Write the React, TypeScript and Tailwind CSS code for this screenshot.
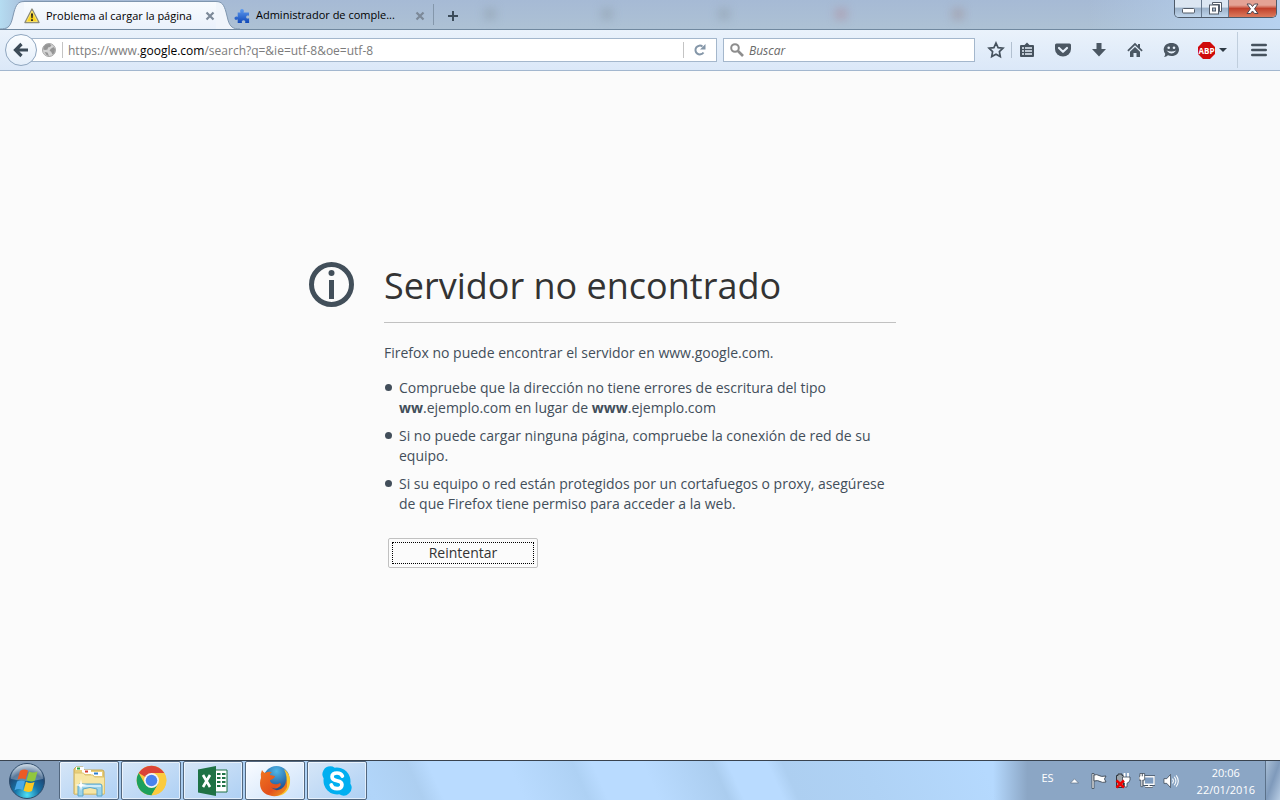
import type { ReactNode } from "react"

const uiFont = "font-['Open_Sans','Noto_Sans',sans-serif]"

const tips: ReactNode[] = [
	<>
		Compruebe que la dirección no tiene errores de escritura del tipo{" "}
		<strong>ww</strong>.ejemplo.com en lugar de <strong>www</strong>
		.ejemplo.com
	</>,
	"Si no puede cargar ninguna página, compruebe la conexión de red de su equipo.",
	"Si su equipo o red están protegidos por un cortafuegos o proxy, asegúrese de que Firefox tiene permiso para acceder a la web.",
]

function WarningIcon() {
	return (
		<svg width="16" height="16" viewBox="0 0 16 16" aria-hidden="true">
			<path d="M8 1 15 14.5H1Z" fill="#f6c913" stroke="#8b8b7a" strokeWidth="1.4" strokeLinejoin="round" />
			<path d="M8 3 13.4 13.6H2.6Z" fill="#fbd51f" stroke="#fff3a8" strokeWidth=".6" />
			<path d="M7 5.5h2l-.4 4.8H7.4ZM7.1 11.2h1.8v1.7H7.1Z" fill="#222" />
		</svg>
	)
}

function PuzzleIcon() {
	return (
		<svg width="16" height="16" viewBox="0 0 16 16" aria-hidden="true">
			<defs>
				<linearGradient id="puzzle" x1="0" y1="0" x2="0" y2="1">
					<stop offset="0" stopColor="#5f9bf0" />
					<stop offset="1" stopColor="#1048b8" />
				</linearGradient>
			</defs>
			<path
				d="M6.5 4.500C5.500 2.600 6.500 1 8 1s2.500 1.600 1.500 3.500H15v3.300c-1.700-.8-2.800-.1-2.800 1.200s1.200 2.100 2.900 1.200V15h-4c.7-1.800-.2-2.700-1.500-2.700S7.300 13.200 8 15H3.700v-3.700C2 12.400.5 11.500.5 10.200S2 8 3.700 8.900V4.500Z"
				fill="url(#puzzle)"
			/>
		</svg>
	)
}

function CloseIcon() {
	return (
		<svg width="10" height="10" viewBox="0 0 10 10" aria-hidden="true">
			<path d="m1.500 1.500 7 7m0-7-7 7" stroke="#7c8998" strokeWidth="2.200" />
		</svg>
	)
}

function TabStrip() {
	return (
		<div className="relative flex h-[30px] shrink-0 items-stretch overflow-hidden border-b border-[#70889f] bg-linear-to-b from-[#a6bad5] to-[#adc1d4]">
			<div className="absolute inset-y-0 right-0 w-48 bg-linear-to-r from-transparent to-[#b7d2f0]" />
			<div className="absolute top-0 left-0 h-full w-6 bg-linear-to-r from-[#b5dcf1] to-[#a9c0dc]" />
			<div className="absolute inset-x-0 top-2 ml-[484px] flex w-[480px] justify-between blur-xs">
				<span className="h-3 w-3 bg-[#8f9fae]/50" />
				<span className="h-3 w-3 bg-[#8f9fae]/50" />
				<span className="h-3 w-3 bg-[#8f9fae]/50" />
				<span className="h-3 w-3 bg-[#b08f9f]/50" />
				<span className="h-3 w-3 bg-[#a0939b]/50" />
			</div>

			<div role="tablist" className="relative flex">
				<div role="tab" aria-selected="true" className="flex pt-px">
					<svg width="24" height="28" viewBox="0 0 24 28" className="-mb-px h-7" aria-hidden="true">
						<path d="M0 29c7 0 10-2 12-10l2-8C16 4 18 .5 24 .5V29Z" fill="#f0f5fb" />
						<path d="M0 28c7 0 10-2 12-9l2-8C16 4 18 .5 24 .5" fill="none" stroke="#7f96af" />
					</svg>
					<div className="-mb-px flex w-[192px] items-center border-t border-[#7f96af] bg-linear-to-b from-[#f8fbfe] to-[#eaf1fb] text-black">
						<WarningIcon />
						<span className="ml-1.5 w-[159px] whitespace-nowrap text-[11px]">Problema al cargar la página</span>
						<button type="button" aria-label="Cerrar pestaña">
							<CloseIcon />
						</button>
					</div>
					<svg width="24" height="28" viewBox="0 0 24 28" className="-mb-px h-7" aria-hidden="true">
						<path d="M0 .5c6 0 8 3.500 10 10.500l2 8c2 7 5 9 12 9v1H0Z" fill="#f0f5fb" />
						<path d="M0 .5c6 0 8 3.500 10 10.500l2 8c2 7 5 9 12 9" fill="none" stroke="#7f96af" />
					</svg>
				</div>
				<div role="tab" aria-selected="false" className="-ml-1.5 flex items-center pt-0.5 text-black">
					<PuzzleIcon />
					<span className="ml-1.5 w-[159px] whitespace-nowrap text-[11px]">Administrador de comple...</span>
					<button type="button" aria-label="Cerrar pestaña">
						<CloseIcon />
					</button>
				</div>
			</div>
			<div className="relative my-1 ml-2 w-px bg-[#8497ab]" />
			<button type="button" aria-label="Nueva pestaña" className="relative ml-3 pt-0.5">
				<svg width="13" height="12" viewBox="0 0 13 12" aria-hidden="true">
					<path d="M7 1v10M2 6h10" stroke="#3c4c5a" strokeWidth="2" />
				</svg>
			</button>

			<div className="relative mr-[3px] ml-auto flex h-[18px] overflow-hidden rounded-b-[5px] border border-t-0 border-[#4d5a69]">
				<button type="button" aria-label="Minimizar" className="flex w-[27px] items-center justify-center border-r border-[#65778c] bg-linear-to-b from-[#dbe6f2] from-40% via-[#9db3cb] via-50% to-[#c0d6ec]">
					<svg width="13" height="6" viewBox="0 0 13 6" className="mt-1" aria-hidden="true">
						<rect x=".5" y=".5" width="12" height="4.500" rx="1" fill="#fff" stroke="#525c69" />
					</svg>
				</button>
				<button type="button" aria-label="Restaurar" className="flex w-[27px] items-center justify-center border-r border-[#65778c] bg-linear-to-b from-[#dbe6f2] from-40% via-[#9db3cb] via-50% to-[#c0d6ec]">
					<svg width="13" height="13" viewBox="0 0 13 13" aria-hidden="true">
						<path d="M3.500.5h9v9h-2v-7h-7Z" fill="#fff" stroke="#525c69" />
						<rect x=".5" y="3" width="9" height="9" fill="#fff" stroke="#525c69" />
						<rect x="3.500" y="6" width="3" height="3" fill="#a9bccf" stroke="#525c69" />
					</svg>
				</button>
				<button type="button" aria-label="Cerrar" className="flex w-[47px] items-center justify-center bg-linear-to-b from-[#e4a294] from-30% via-[#c0402b] via-50% to-[#dc7a5c]">
					<svg width="13" height="12" viewBox="0 0 13 12" aria-hidden="true">
						<path d="M1 1h3.500l2 2.500L8.500 1H12L8.500 5.800l3.500 4.700H8.500L6.500 8l-2 2.500H1l3.500-4.700Z" fill="#fff" stroke="#4f4852" />
					</svg>
				</button>
			</div>
		</div>
	)
}

function AddressBar() {
	return (
		<div className="flex min-w-0 flex-1 items-center">
			<button
				type="button"
				aria-label="Atrás"
				className="relative z-10 ml-[5px] flex h-8 w-8 shrink-0 items-center justify-center rounded-full border border-[#8fa6bf] bg-linear-to-b from-[#fbfdff] to-[#e4eefa]"
			>
				<svg width="16" height="16" viewBox="0 0 16 16" aria-hidden="true">
					<path d="M8.500 2 2.500 8l6 6M3 8h12" fill="none" stroke="#3c4b58" strokeWidth="3.200" />
				</svg>
			</button>
			<div className="-ml-2 flex h-6 min-w-0 flex-1 items-center border border-[#a4b7cc] bg-white pl-3">
				<svg width="14" height="14" viewBox="0 0 14 14" className="shrink-0" aria-hidden="true">
					<circle cx="7" cy="7" r="6.500" fill="#d4d4d4" stroke="#a6a6a6" />
					<path d="M1.500 4 4 1.200 8 1l1.500 1.500L8 4 6 4.500 5.500 6.500 3 7 1.300 6.500ZM8.500 6l3-2 1.500 2-.5 4-2 1.500-1.500-3-1.500-.5ZM2.500 9l3 .5L7 13 4.500 12Z" fill="#959595" />
				</svg>
				<div className="mr-[5px] ml-1.5 h-4 w-px shrink-0 bg-[#c4c4c4]" />
				<div className="relative h-full min-w-0 flex-1">
					<input
						aria-label="Dirección"
						defaultValue="https://www.google.com/search?q=&ie=utf-8&oe=utf-8"
						className="absolute inset-0 h-full w-full bg-transparent text-xs text-transparent caret-black outline-none"
					/>
					<div aria-hidden="true" className="pointer-events-none flex h-full items-center pt-0.5 text-xs whitespace-nowrap text-[#7c7c7c]">
						https://www.<span className="text-black">google.com</span>/search?q=&amp;ie=utf-8&amp;oe=utf-8
					</div>
				</div>
				<div className="h-4 w-px shrink-0 bg-[#c4c4c4]" />
				<button type="button" aria-label="Recargar" className="flex w-8 shrink-0 items-center justify-center">
					<svg width="12" height="12" viewBox="0 0 12 12" aria-hidden="true">
						<path d="M9.500 8.500A4.400 4.400 0 1 1 8.500 2.500" fill="none" stroke="#8496a8" strokeWidth="2" />
						<path d="M11.500 0v5.500H6Z" fill="#8496a8" />
					</svg>
				</button>
			</div>
		</div>
	)
}

function ToolbarButton({ label, children }: { label: string; children: ReactNode }) {
	return (
		<button type="button" aria-label={label} className="flex h-8 w-9 shrink-0 items-center justify-center">
			<svg width="18" height="18" viewBox="0 0 18 18" aria-hidden="true">
				{children}
			</svg>
		</button>
	)
}

function Toolbar() {
	return (
		<div className="flex h-[41px] shrink-0 items-center border-b border-[#a3b7cf] bg-linear-to-b from-[#eaf2fb] to-[#dbe8f8]">
			<AddressBar />
			<label className="ml-1.5 flex h-6 w-[252px] shrink-0 items-center border border-[#a4b7cc] bg-white pl-1.5">
				<svg width="14" height="14" viewBox="0 0 14 14" className="shrink-0" aria-hidden="true">
					<circle cx="5" cy="5" r="3.800" fill="none" stroke="#8d8d8d" strokeWidth="2" />
					<path d="m8 8 5 5" stroke="#8d8d8d" strokeWidth="2.600" />
				</svg>
				<input
					aria-label="Buscar"
					placeholder="Buscar"
					className="ml-[5px] w-full min-w-0 bg-transparent pt-0.5 text-xs italic outline-none placeholder:text-[#6a6a6a]"
				/>
			</label>

			<button type="button" aria-label="Añadir a marcadores" className="ml-3 flex h-8 w-[18px] shrink-0 items-center justify-center">
				<svg width="18" height="18" viewBox="0 0 18 18" aria-hidden="true">
					<path d="m9 2 2.100 4.600 4.900.6-3.600 3.400.9 5L9 13.200l-4.300 2.400.9-5L2 7.200l4.900-.6Z" fill="none" stroke="#46525e" strokeWidth="1.700" />
				</svg>
			</button>
			<div className="ml-1.5 h-4 w-px shrink-0 bg-[#b2c0d0]" />
			<div className="-ml-[3px] flex items-center">
				<ToolbarButton label="Marcadores">
					<path d="M3 4h3.500L9 1.500 11.500 4H15q1 0 1 1v10q0 1-1 1H3q-1 0-1-1V5q0-1 1-1Z" fill="#46525e" />
					<path d="M4 7h2M7 7h7M4 10h2M7 10h7M4 13h2M7 13h7" stroke="#e6effa" strokeWidth="1.600" />
				</ToolbarButton>
				<ToolbarButton label="Pocket">
					<path d="M2.500 2.500h13q1.500 0 1.500 1.500v4a8 7.500 0 0 1-16 0V4q0-1.500 1.500-1.500Z" fill="#4b5763" />
					<path d="m5 7 4 3.800L13 7" fill="none" stroke="#e6effa" strokeWidth="2.200" strokeLinecap="round" strokeLinejoin="round" />
				</ToolbarButton>
				<ToolbarButton label="Descargas">
					<path d="M6.500 2h5v6H16l-7 7.500L2 8h4.500Z" fill="#4b5763" />
				</ToolbarButton>
				<ToolbarButton label="Inicio">
					<path d="M9 1.800 1.300 9.300l1.200 1.200L9 4.300l6.500 6.200 1.200-1.200L14 6.700V3h-2v1.800Z" fill="#4b5763" />
					<path d="M9 5.900 4 10.700V16h3.500v-4h3v4H14v-5.300Z" fill="#4b5763" />
				</ToolbarButton>
				<ToolbarButton label="Chat">
					<path d="M9.500 2C14 2 17 4.700 17 8.500S14 15 9.500 15q-2 0-3.500-.7Q4.500 16 2 16q1.300-1.500 1.200-3.300Q1.700 11 1.700 8.500C1.700 4.700 5 2 9.500 2Z" fill="#4b5763" />
					<circle cx="6.700" cy="6.700" r="1.300" fill="#e6effa" />
					<circle cx="12" cy="6.700" r="1.300" fill="#e6effa" />
					<path d="M4.500 9.500Q9.500 15.500 14.300 9.500 9.500 11.500 4.500 9.500Z" fill="#e6effa" />
				</ToolbarButton>
			</div>
			<button type="button" aria-label="Adblock Plus" className="ml-[9px] flex h-8 w-[28px] shrink-0 items-center gap-1">
				<svg width="17" height="17" viewBox="0 0 17 17" className="shrink-0" aria-hidden="true">
					<path d="M5 0h7l5 5v7l-5 5H5l-5-5V5Z" fill="#cf0a0a" />
					<text x="8.500" y="11.500" textAnchor="middle" fontSize="8" fontWeight="700" fill="#fff" fontFamily="Open Sans, sans-serif">
						ABP
					</text>
				</svg>
				<svg width="8" height="4" viewBox="0 0 8 4" className="shrink-0" aria-hidden="true">
					<path d="M0 0h8L4 4Z" fill="#2f3b46" />
				</svg>
			</button>
			<div className="ml-[11px] h-9 w-px shrink-0 bg-[#c0cedd]" />
			<button type="button" aria-label="Abrir menú" className="flex h-8 w-[42px] shrink-0 items-center justify-center">
				<svg width="16" height="14" viewBox="0 0 16 14" aria-hidden="true">
					<path d="M1.300 2h13.400M1.300 7h13.400M1.300 12h13.400" stroke="#46525e" strokeWidth="2.600" strokeLinecap="round" />
				</svg>
			</button>
		</div>
	)
}

function ErrorPage() {
	return (
		<main className="flex flex-1 items-center justify-center bg-[#fbfbfb] pb-0.5 text-[#424e5a]">
			<div className="flex w-full max-w-[662px] items-start pr-[75px]">
				<svg width="45" height="45" viewBox="0 0 45 45" className="mr-[30px] shrink-0" aria-hidden="true">
					<circle cx="22.500" cy="22.500" r="20" fill="none" stroke="#424f5a" strokeWidth="5" />
					<circle cx="22.500" cy="11" r="3" fill="#424f5a" />
					<path d="M20 18h5v19h-5Z" fill="#424f5a" />
				</svg>
				<div className="min-w-0 flex-1 text-sm leading-5">
					<h1 className="border-b border-[#c1c1c1] pb-3 text-[36px] leading-12 text-[#333]">
						Servidor no encontrado
					</h1>
					<p className="mt-5">Firefox no puede encontrar el servidor en www.google.com.</p>
					<ul className="mt-[15px] space-y-2">
						{tips.map((tip, i) => (
							<li key={i} className="flex">
								<span className="mt-1.5 mr-[7px] ml-px size-[7px] shrink-0 rounded-full bg-[#424e5a]" />
								<span>{tip}</span>
							</li>
						))}
					</ul>
					<button type="button" className="mt-6 ml-1 h-[30px] w-[150px] rounded-xs border border-[#c1c1c1] bg-[#fbfbfb] p-[3px] text-[#333]">
						<span className="flex h-full items-center justify-center border border-dotted border-black">Reintentar</span>
					</button>
				</div>
			</div>
		</main>
	)
}

function StartOrb() {
	return (
		<svg width="38" height="38" viewBox="0 0 38 38" aria-hidden="true">
			<defs>
				<radialGradient id="orb" cx=".5" cy=".9" r=".85">
					<stop offset="0" stopColor="#4fe0f5" />
					<stop offset=".4" stopColor="#1675a9" />
					<stop offset=".75" stopColor="#1f4876" />
					<stop offset="1" stopColor="#a9bfd3" />
				</radialGradient>
			</defs>
			<circle cx="19" cy="19" r="17.500" fill="url(#orb)" stroke="#2f4c6b" />
			<path d="M3 17a16 15 0 0 1 32 0q-16 4-32 0Z" fill="#fff" opacity=".28" />
			<path d="M12 9q4-2.500 8-.5l-2.500 9q-3.500-2-8 .3Z" fill="#ec5a24" />
			<path d="M21 9.500q4 2 8.500 0l-2.500 9q-4 2-8.400-.2Z" fill="#91c73e" />
			<path d="M9 19.500q4-2 8-.3l-2.500 8.800q-3.600-2-8 .3Z" fill="#4aa8e8" />
			<path d="M18 19.800q4 2.200 8.500.3L24 29q-4 2-8.400-.2Z" fill="#fbc822" />
		</svg>
	)
}

function ExplorerIcon() {
	return (
		<svg width="34" height="32" viewBox="0 0 34 32" aria-hidden="true">
			<path d="M2 29V4l2-2h7l1 3h18q2 0 2 2v22Z" fill="#e9cf7b" stroke="#c6a652" />
			<path d="M4 2h8v3H4Z" fill="#fff" />
			<path d="M5 2.500h3v2H5Z" fill="#28a43a" />
			<path d="M10 5h9v4h-9Z" fill="#fff" />
			<path d="M13 5.500h3v2h-3Z" fill="#d63e2e" />
			<path d="M19 7h11v4H19Z" fill="#fff" />
			<path d="M22 7.500h4v2h-4Z" fill="#2b7fd0" />
			<path d="M2.500 8h9l1.500 2h8l1.500 2h10v17h-30Z" fill="#f7e6a5" stroke="#dcc273" />
			<path d="M6 31V21q0-2 2-2h20q2 0 2 2v10h-5v-7q-7-3-14 0v7Z" fill="#9bd3ea" stroke="#5aa6cb" />
			<path d="M7 21h22" stroke="#e2f5fc" strokeWidth="1.500" />
			<path d="m9 14 1 5 5 1-5 1-1 5-1-5-5-1 5-1Z" fill="#fff" />
		</svg>
	)
}

function ChromeIcon() {
	return (
		<svg width="31" height="31" viewBox="0 0 48 48" aria-hidden="true">
			<circle cx="24" cy="24" r="23" fill="#fbcb3f" />
			<path d="M24 24 4.100 12.500A23 23 0 0 1 43.900 12.500H24Z" fill="#db4437" />
			<path d="M4.100 12.500A23 23 0 0 0 24 47l10-17.300-10 4.300-10-4.300Z" fill="#1da05c" />
			<path d="M24 47a23 23 0 0 0 19.900-34.500H24L34 30Z" fill="#fbcb3f" />
			<circle cx="24" cy="24" r="11.500" fill="#f4f4f4" />
			<circle cx="24" cy="24" r="9" fill="#4a83ee" />
		</svg>
	)
}

function ExcelIcon() {
	return (
		<svg width="32" height="32" viewBox="0 0 32 32" aria-hidden="true">
			<path d="M17 5h13v22H17Z" fill="#fff" stroke="#1f7245" />
			<path d="M20 9h3.500M25 9h3.500M20 13h3.500M25 13h3.500M20 17h3.500M25 17h3.500M20 21h3.500M25 21h3.500" stroke="#1f7245" strokeWidth="2" />
			<path d="M1 4.500 19 1v30L1 27.500Z" fill="#1f7245" />
			<path d="m6 10 7 12m0-12L6 22" stroke="#fff" strokeWidth="2.600" />
		</svg>
	)
}

function FirefoxIcon() {
	return (
		<svg width="32" height="32" viewBox="0 0 32 32" aria-hidden="true">
			<defs>
				<linearGradient id="fox" x1="0" y1="0" x2="1" y2="1">
					<stop offset="0" stopColor="#f0761f" />
					<stop offset=".6" stopColor="#e2501c" />
					<stop offset="1" stopColor="#f3a21f" />
				</linearGradient>
				<radialGradient id="globe" cx=".5" cy=".2" r=".8">
					<stop offset="0" stopColor="#4fb7e8" />
					<stop offset="1" stopColor="#153f86" />
				</radialGradient>
			</defs>
			<circle cx="17.500" cy="14" r="13" fill="url(#globe)" />
			<path d="M25 4q7 5 6 14-2 13-15 13 9-3 11-11 2-8-2-16Z" fill="#fbc52c" />
			<path
				d="M3 5q1 2 3 3 3-2 7-1-2 1-2 3l5 1q-1 3-5 4 0 3 4 4 3 1 6-1 2 2-1 4-4 3-8 0 4 5 10 2 5-3 5-9 3 7-2 12-5 5-12 4Q1 29 1 18q0-3 1-5-1-4 1-8Z"
				fill="url(#fox)"
			/>
		</svg>
	)
}

function SkypeIcon() {
	return (
		<svg width="32" height="32" viewBox="0 0 24 24" aria-hidden="true">
			<path d="M7 1a6 6 0 0 1 3.300 1A10.300 10.300 0 0 1 22 13.800 6 6 0 0 1 13.700 22 10.300 10.300 0 0 1 2 10.200 6 6 0 0 1 7 1Z" fill="#00aff0" />
			<path
				d="M16 8.300Q15 6 12 6 8.300 6 8.300 8.800q0 2.300 3.700 3 3.700.7 3.700 3 0 2.900-3.700 2.900-3.500 0-4.300-2.700"
				fill="none"
				stroke="#fff"
				strokeWidth="2.800"
				strokeLinecap="round"
			/>
		</svg>
	)
}

const apps = [
	{ name: "Explorador de Windows", icon: <ExplorerIcon /> },
	{ name: "Google Chrome", icon: <ChromeIcon /> },
	{ name: "Excel", icon: <ExcelIcon /> },
	{ name: "Firefox", icon: <FirefoxIcon />, active: true },
	{ name: "Skype", icon: <SkypeIcon /> },
]

function SystemTray() {
	return (
		<div className="ml-auto flex items-center bg-linear-to-r from-transparent to-[#8ba6c5] to-12% pl-12 text-white">
			<span className="mr-4 mb-1 text-[11px]">ES</span>
			<button type="button" aria-label="Mostrar iconos ocultos" className="mr-3">
				<svg width="9" height="6" viewBox="0 0 9 6" aria-hidden="true">
					<path d="M.5 5 4.500.8l4 4.200Z" fill="#fff" stroke="#5f7084" strokeWidth=".7" />
				</svg>
			</button>
			<div className="mr-[18px] flex items-center gap-2">
				<svg width="16" height="16" viewBox="0 0 16 16" aria-hidden="true">
					<path d="M1 .5h2v15H1Z" fill="#fff" stroke="#3b4653" strokeWidth=".8" />
					<path d="M3 2q3-1 5 .5t7 .5l-1.500 3L15 9q-4 1-6-.5T3 8Z" fill="#fff" stroke="#3b4653" strokeWidth=".9" />
				</svg>
				<svg width="16" height="16" viewBox="0 0 16 16" aria-hidden="true">
					<path d="M1.500 2.500h1.500v-1.500h4v1.500h1.500v12h-7Z" fill="#9aa3ab" stroke="#2f363e" />
					<path d="M9.500 0v4M13 0v4" stroke="#fff" strokeWidth="1.800" />
					<path d="M7.500 4h7.500v3q-1 3-3 3.200V14H9.500v-4Q7.500 9.500 7.500 7Z" fill="#fff" stroke="#3b4653" strokeWidth=".8" />
					<path d="m1.500 7.500 7.500 7m0-7-7.500 7" stroke="#f00000" strokeWidth="2.400" />
				</svg>
				<svg width="16" height="16" viewBox="0 0 17 16" aria-hidden="true">
					<rect x="5.500" y="3.500" width="10.500" height="8" fill="#7e9cc0" stroke="#3b4653" strokeWidth="3" />
					<path d="M6.500 14h8M10.500 12v2" stroke="#3b4653" strokeWidth="3" />
					<rect x="5.500" y="3.500" width="10.500" height="8" fill="#7e9cc0" stroke="#fff" strokeWidth="1.500" />
					<path d="M6.500 14h8M10.500 12v2" stroke="#fff" strokeWidth="1.500" />
					<path d="M1 0h5v7H4v7H2V7H0V3h1Z" fill="#fff" stroke="#3b4653" strokeWidth=".8" />
					<path d="M3.500 0v3" stroke="#3b4653" />
				</svg>
				<svg width="16" height="16" viewBox="0 0 17 16" aria-hidden="true">
					<path d="M1 5.500h3L8 1v14l-4-4.500H1Z" fill="#fff" stroke="#3b4653" strokeWidth=".8" />
					<path d="M10 5.500q2 2.500 0 5M12 3.500q3.500 4.500 0 9M14 2q4.500 6 0 12" fill="none" stroke="#fff" strokeWidth="1.100" />
				</svg>
			</div>
			<div className="mr-2.5 text-center text-[11px] leading-[17px]">
				<div>20:06</div>
				<div>22/01/2016</div>
			</div>
			<button
				type="button"
				aria-label="Mostrar escritorio"
				className="h-full w-[15px] self-stretch border-l border-[#5b7189] bg-linear-to-br from-[#a9bfd6] via-[#7f9abb] to-[#b8cde4]"
			/>
		</div>
	)
}

function Taskbar() {
	return (
		<footer className="flex h-10 shrink-0 border-t border-[#39434f] bg-[linear-gradient(66deg,#9fc2e6_0,#b1d5f9_344px,#adcff1_387px,#b9dbff_406px,#b9dbff_479px,#aed1f4_538px,#b9dbff_556px,#b9dbff_602px,#abcdef_666px,#b9dbff_680px,#b9dbff_716px,#adcff1_730px,#afd2f5_803px,#b5d9fe_913px)]">
			<button type="button" aria-label="Inicio" className="flex w-[59px] items-center bg-[#869eba] pl-2">
				<StartOrb />
			</button>
			<div className="flex gap-0.5">
				{apps.map((app) => (
					<button
						key={app.name}
						type="button"
						aria-label={app.name}
						className={`flex w-[60px] items-center justify-center rounded-xs border border-[#52677f] inset-ring inset-ring-white/60 ${
							app.active
								? "bg-linear-to-br from-[#fafcff] to-[#cbe1fa]"
								: "bg-linear-to-br from-[#d6e6f7] to-[#aed0f4]"
						}`}
					>
						{app.icon}
					</button>
				))}
			</div>
			<SystemTray />
		</footer>
	)
}

export default function App() {
	return (
		<div className={`flex h-screen flex-col overflow-hidden ${uiFont}`}>
			<header>
				<TabStrip />
				<Toolbar />
			</header>
			<ErrorPage />
			<Taskbar />
		</div>
	)
}
